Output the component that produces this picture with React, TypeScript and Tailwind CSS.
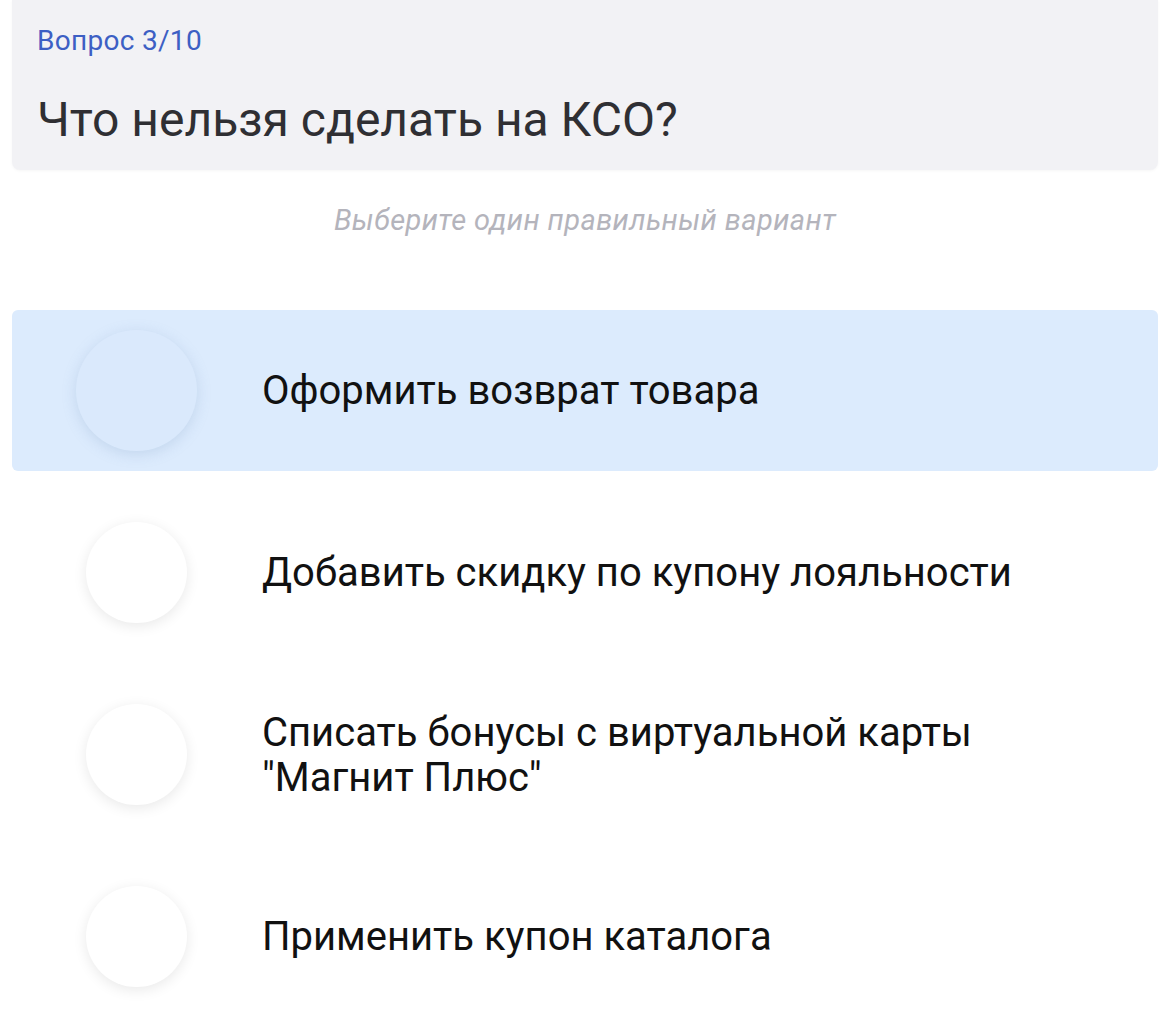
const FONT = { fontFamily: "Roboto, 'Noto Sans', sans-serif" };

const options = [
  { id: 1, text: "Оформить возврат товара" },
  { id: 2, text: "Добавить скидку по купону лояльности" },
  { id: 3, text: 'Списать бонусы с виртуальной карты "Магнит Плюс"' },
  { id: 4, text: "Применить купон каталога" },
];

export default function App() {
  const selected = 1;

  return (
    <div className="w-[1170px] h-[1026px] bg-white overflow-hidden" style={FONT}>
      {/* question header */}
      <div className="mx-[12px] h-[170px] rounded-b-[8px] bg-[#f2f2f5] pl-[25px] pt-[24px] shadow-[0_1px_3px_rgba(0,0,0,0.04)]">
        <div className="text-[28px] leading-[34px] tracking-[0.3px] text-[#3d5fc4]">Вопрос 3/10</div>
        <div className="mt-[34px] text-[48px] leading-[56px] text-[#2f2f33]">Что нельзя сделать на КСО?</div>
      </div>

      <div className="mt-[33px] text-center italic text-[29px] leading-[34px] tracking-[0.4px] text-[#b4b4bc]">
        Выберите один правильный вариант
      </div>

      <div className="mt-[73px] mx-[12px] flex flex-col gap-[21px]">
        {options.map(o => {
          const active = o.id === selected;
          return (
            <div
              key={o.id}
              className={`h-[161px] rounded-[6px] flex items-center ${active ? "bg-[#dcebfd]" : ""}`}
            >
              <div className="ml-[64px] w-[121px] h-[121px] flex items-center justify-center shrink-0">
                {active ? (
                  <div className="w-[121px] h-[121px] rounded-full bg-[#dae9fc] shadow-[0_3px_14px_rgba(120,150,190,0.25)]" />
                ) : (
                  <div className="w-[101px] h-[101px] rounded-full bg-white shadow-[0_3px_14px_rgba(0,0,0,0.09)]" />
                )}
              </div>
              <div className="ml-[65px] pr-[120px] text-[40px] leading-[45px] text-[#111111]">{o.text}</div>
            </div>
          );
        })}
      </div>
    </div>
  );
}
